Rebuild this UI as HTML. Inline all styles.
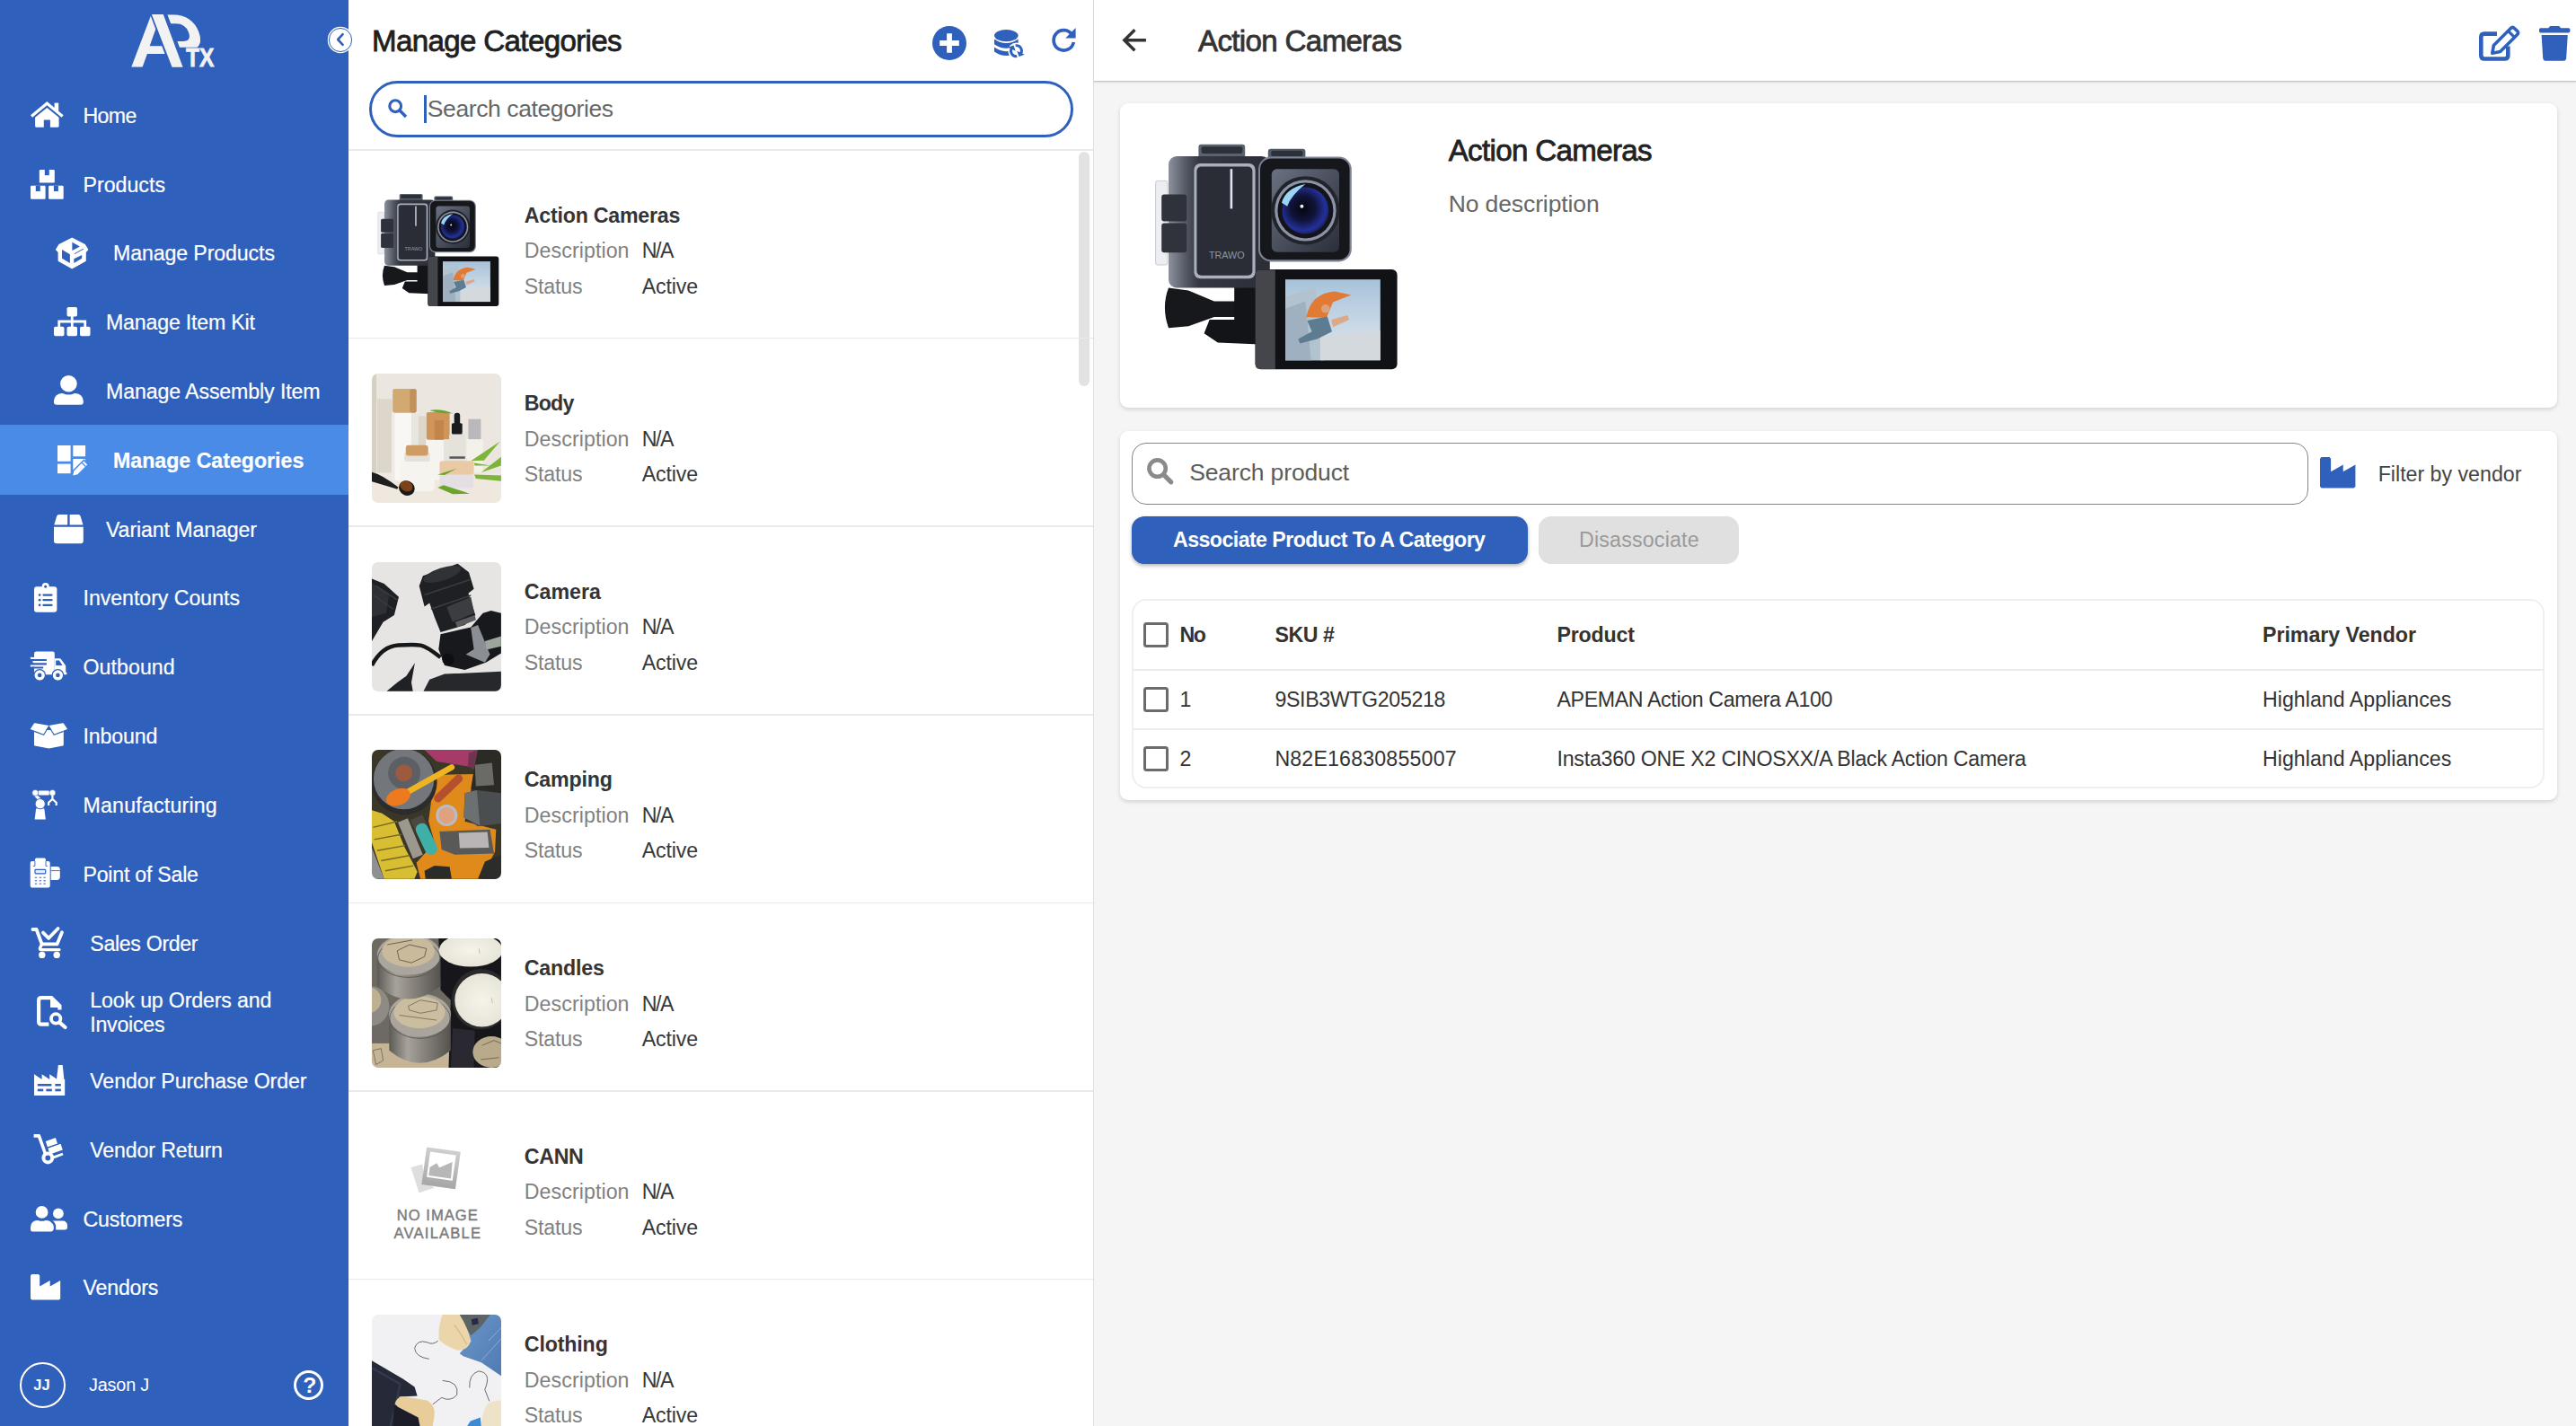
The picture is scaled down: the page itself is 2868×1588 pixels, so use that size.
<!DOCTYPE html>
<html lang="en"><head><meta charset="utf-8"><title>Manage Categories</title>
<style>
html,body{margin:0;padding:0}
body{width:2868px;height:1588px;position:relative;overflow:hidden;background:#f4f4f4;font-family:"Liberation Sans",sans-serif}
.t{position:absolute;white-space:nowrap}
.med{-webkit-text-stroke:0.8px currentColor}
.nv{-webkit-text-stroke:0.2px #fff}
svg{position:absolute;overflow:visible}
</style></head>
<body>
<div id="sidebar" style="position:absolute;left:0;top:0;width:388px;height:1588px;background:#2f60bb"></div>
<div style="position:absolute;left:0;top:473px;width:388px;height:77.6px;background:#4b8be8"></div>
<div class="t nv" id="t1" style="left:92.5px;top:113.7px;font-size:23.18px;line-height:30.1px;color:#fff;letter-spacing:-0.638px;">Home</div>
<div class="t nv" id="t2" style="left:92.5px;top:190.5px;font-size:23.18px;line-height:30.1px;color:#fff;letter-spacing:0.008px;">Products</div>
<div class="t nv" id="t3" style="left:126.0px;top:267.4px;font-size:23.18px;line-height:30.1px;color:#fff;letter-spacing:-0.116px;">Manage Products</div>
<div class="t nv" id="t4" style="left:118.0px;top:344.4px;font-size:23.18px;line-height:30.1px;color:#fff;letter-spacing:-0.194px;">Manage Item Kit</div>
<div class="t nv" id="t5" style="left:118.0px;top:421.4px;font-size:23.18px;line-height:30.1px;color:#fff;letter-spacing:-0.118px;">Manage Assembly Item</div>
<div class="t nv" id="t6" style="left:126.0px;top:497.8px;font-size:23.18px;line-height:30.1px;color:#fff;font-weight:700;letter-spacing:-0.011px;">Manage Categories</div>
<div class="t nv" id="t7" style="left:118.0px;top:574.6px;font-size:23.18px;line-height:30.1px;color:#fff;letter-spacing:-0.114px;">Variant Manager</div>
<div class="t nv" id="t8" style="left:92.5px;top:651.4px;font-size:23.18px;line-height:30.1px;color:#fff;letter-spacing:-0.045px;">Inventory Counts</div>
<div class="t nv" id="t9" style="left:92.5px;top:728.4px;font-size:23.18px;line-height:30.1px;color:#fff;letter-spacing:0.059px;">Outbound</div>
<div class="t nv" id="t10" style="left:92.5px;top:805.2px;font-size:23.18px;line-height:30.1px;color:#fff;letter-spacing:-0.127px;">Inbound</div>
<div class="t nv" id="t11" style="left:92.5px;top:881.8px;font-size:23.18px;line-height:30.1px;color:#fff;letter-spacing:0.196px;">Manufacturing</div>
<div class="t nv" id="t12" style="left:92.5px;top:958.6px;font-size:23.18px;line-height:30.1px;color:#fff;letter-spacing:-0.241px;">Point of Sale</div>
<div class="t nv" id="t13" style="left:100.3px;top:1035.5px;font-size:23.18px;line-height:30.1px;color:#fff;letter-spacing:-0.335px;">Sales Order</div>
<div class="t nv" id="t14" style="left:100.3px;top:1098.8px;font-size:23.18px;line-height:30.1px;color:#fff;letter-spacing:-0.166px;">Look up Orders and</div>
<div class="t nv" id="t15" style="left:100.3px;top:1125.5px;font-size:23.18px;line-height:30.1px;color:#fff;letter-spacing:-0.259px;">Invoices</div>
<div class="t nv" id="t16" style="left:100.3px;top:1189.3px;font-size:23.18px;line-height:30.1px;color:#fff;letter-spacing:-0.117px;">Vendor Purchase Order</div>
<div class="t nv" id="t17" style="left:100.3px;top:1266.0px;font-size:23.18px;line-height:30.1px;color:#fff;letter-spacing:-0.144px;">Vendor Return</div>
<div class="t nv" id="t18" style="left:92.5px;top:1342.8px;font-size:23.18px;line-height:30.1px;color:#fff;letter-spacing:-0.141px;">Customers</div>
<div class="t nv" id="t19" style="left:92.5px;top:1419.3px;font-size:23.18px;line-height:30.1px;color:#fff;letter-spacing:-0.189px;">Vendors</div>
<svg style="left:34.2px;top:113.3px" width="36.7" height="28.7" viewBox="0 0 36.7 28.7" ><path fill="#fff" d="M18.35,0 L36.7,15.2 L34.6,17.7 L18.35,4.3 L2.1,17.7 L0,15.2Z"/><rect fill="#fff" x="26.6" y="1.6" width="4.6" height="9"/><path fill="#fff" d="M18.35,6.9 L31.6,17.8 V27.6 Q31.6,28.7 30.5,28.7 H21.9 V20.4 H14.8 V28.7 H6.2 Q5.1,28.7 5.1,27.6 V17.8Z"/></svg>
<svg style="left:34.2px;top:188.5px" width="36.7" height="32.8" viewBox="0 0 36.7 32.8" ><rect fill="#fff" x="9.8" y="0" width="17" height="14.6" rx="1.2"/><rect fill="#2f60bb" x="15.8" y="0" width="5" height="6.2"/><rect fill="#fff" x="0" y="17.8" width="16.6" height="15" rx="1.2"/><rect fill="#2f60bb" x="5.8" y="17.8" width="5" height="6.2"/><rect fill="#fff" x="20.1" y="17.8" width="16.6" height="15" rx="1.2"/><rect fill="#2f60bb" x="25.9" y="17.8" width="5" height="6.2"/></svg>
<svg style="left:61.9px;top:265px" width="36.3" height="34.3" viewBox="0 0 36.3 34.3" ><path fill="#fff" stroke="#fff" stroke-width="1.6" stroke-linejoin="round" d="M18.2,0.4 L32.4,7.8 L35.5,13 L33,15.6 V25.2 L18.2,33.5 L3.4,25.2 V15.6 L0.8,13 L3.9,7.8Z"/><path fill="#2f60bb" d="M18.4,4.7 L26.9,9.5 L18.4,14.1Z"/><path fill="#2f60bb" d="M7,12.9 L15.9,18.2 V28 L7,22.8Z"/><path fill="#2f60bb" d="M20.3,23.2 L29.2,18.9 V22.8 L20.3,28Z"/><path d="M21.1,17.6 L30.9,12.2" stroke="#2f60bb" stroke-width="1"/></svg>
<svg style="left:59.7px;top:341.7px" width="40.5" height="32.3" viewBox="0 0 40.5 32.3" ><rect fill="#fff" x="14.5" y="0" width="11.5" height="10.5" rx="1.8"/><rect fill="#fff" x="0" y="21.8" width="11.5" height="10.5" rx="1.8"/><rect fill="#fff" x="14.5" y="21.8" width="11.5" height="10.5" rx="1.8"/><rect fill="#fff" x="29" y="21.8" width="11.5" height="10.5" rx="1.8"/><path d="M20.25,10 V22 M5.75,22 V16 H34.75 V22" fill="none" stroke="#fff" stroke-width="2.8"/></svg>
<svg style="left:59.7px;top:418.3px" width="32.8" height="32.8" viewBox="0 0 32.8 32.8" ><circle fill="#fff" cx="16.4" cy="9.3" r="9.3"/><path fill="#fff" d="M0,29.8 V28.6 A8.6,8.6 0 0 1 8.6,20 H9.8 A15,15 0 0 0 23,20 H24.2 A8.6,8.6 0 0 1 32.8,28.6 V29.8 A3,3 0 0 1 29.8,32.8 H3 A3,3 0 0 1 0,29.8Z"/></svg>
<svg style="left:64.3px;top:496px" width="34.2" height="33.6" viewBox="0 0 34.2 33.6" ><rect fill="#fff" x="0" y="0" width="14.6" height="17.8"/><rect fill="#fff" x="0" y="20.6" width="14.6" height="10.6"/><rect fill="#fff" x="17.3" y="0" width="13.8" height="12.3"/><path fill="#fff" d="M17.3,15 H31.1 V19 L23,27.5 H17.3Z"/><path d="M18.2,32.6 L32.6,18.2" stroke="#4b8be8" stroke-width="8.6" fill="none"/><path fill="#fff" d="M17.2,33.6 L18.4,28.4 L29.3,17.5 L33.2,21.4 L22.3,32.3Z"/><path d="M27.2,19.2 L31.4,23.4" stroke="#4b8be8" stroke-width="1.4"/></svg>
<svg style="left:59.7px;top:572.6px" width="32.8" height="32.3" viewBox="0 0 32.8 32.3" ><path fill="#fff" d="M5.6,0 H15.2 V11.4 H0.3 L3.2,1.8 Q3.8,0 5.6,0Z"/><path fill="#fff" d="M27.2,0 H17.6 V11.4 H32.5 L29.6,1.8 Q29,0 27.2,0Z"/><path fill="#fff" d="M0,13.7 H32.8 V29.3 A3,3 0 0 1 29.8,32.3 H3 A3,3 0 0 1 0,29.3Z"/></svg>
<svg style="left:37.8px;top:649.2px" width="25.4" height="32.8" viewBox="0 0 25.4 32.8" ><rect fill="#fff" x="0" y="4.2" width="25.4" height="28.6" rx="3"/><circle fill="#fff" cx="12.7" cy="4" r="4"/><circle fill="#2f60bb" cx="12.7" cy="4.2" r="1.5"/><g stroke="#2f60bb" stroke-width="2.2" stroke-linecap="round"><path d="M10.4,13.6 H19.6 M10.4,19.2 H19.6 M10.4,24.8 H19.6"/></g><g fill="#2f60bb"><circle cx="6.1" cy="13.6" r="1.4"/><circle cx="6.1" cy="19.2" r="1.4"/><circle cx="6.1" cy="24.8" r="1.4"/></g></svg>
<svg style="left:34.2px;top:725.8px" width="40.5" height="32" viewBox="0 0 40.5 32" ><path fill="#fff" d="M6.4,-0.4 H24.6 Q26.8,-0.4 26.8,1.8 V25.2 H4 V2 Q4,-0.4 6.4,-0.4Z"/><path fill="#fff" d="M0.7,5.7 H5 V7.9 H0.7 Q-0.3,7.9 -0.3,6.8 Q-0.3,5.7 0.7,5.7Z M3.3,10.1 H5 V12.2 H3.3 Q2.3,12.2 2.3,11.1 Q2.3,10.1 3.3,10.1Z M0.7,14.4 H5 V16.5 H0.7 Q-0.3,16.5 -0.3,15.4 Q-0.3,14.4 0.7,14.4Z"/><path fill="#2f60bb" d="M3.6,7.9 H17.9 V10.1 H3.6Z M3.6,12.2 H17.9 V14.4 H3.6Z M2,16.5 H14.2 V18.4 H2Z M2,3.6 H4 V5.7 H2Z"/><path fill="#fff" d="M26.8,7.2 H32.2 Q33.2,7.2 33.9,8 L38.6,14.6 Q39.2,15.4 39.2,16.4 V22.4 H39.6 Q40.4,22.4 40.4,23.2 V24.4 Q40.4,25.2 39.6,25.2 H26.8Z"/><path fill="#2f60bb" d="M28.2,9.4 H31.9 L35.6,15 H28.2Z"/><circle fill="#fff" cx="10.2" cy="25.9" r="6.3" stroke="#2f60bb" stroke-width="1.3"/><circle fill="#2f60bb" cx="10.2" cy="25.9" r="2.3"/><circle fill="#fff" cx="30.4" cy="25.9" r="6.3" stroke="#2f60bb" stroke-width="1.3"/><circle fill="#2f60bb" cx="30.4" cy="25.9" r="2.3"/></svg>
<svg style="left:34.2px;top:803.8px" width="40.5" height="29.5" viewBox="0 0 40.5 29.5" ><path fill="#fff" d="M4,9 H36.8 V25.6 Q36.8,26.4 36,26.6 L20.4,29.5 L4.8,26.6 Q4,26.4 4,25.6Z"/><path fill="#fff" d="M-0.3,7.9 L4,1.6 Q4.4,1 5.2,1.2 L20.4,4 L14.5,13.6Z"/><path fill="#fff" d="M41.1,7.9 L36.8,1.6 Q36.4,1 35.6,1.2 L20.4,4 L26.3,13.6Z"/><path d="M4.2,10.4 L14.6,14.3 L20.4,5 L26.2,14.3 L36.6,10.4" fill="none" stroke="#2f60bb" stroke-width="1.15"/></svg>
<svg style="left:36.4px;top:878.7px" width="27.9" height="33.7" viewBox="0 0 27.9 33.7" ><path fill="#fff" d="M4.1,21.4 H13.3 L14.8,33.5 H2.6Z"/><path d="M3.6,6.6 L8.2,11.4" stroke="#fff" stroke-width="3.4"/><circle fill="#fff" cx="8.7" cy="16.2" r="5.6" stroke="#2f60bb" stroke-width="0.9"/><rect fill="#fff" x="6.6" y="1.6" width="12.4" height="4.8" rx="1.4"/><circle fill="#fff" cx="3.3" cy="3.9" r="3.5" stroke="#2f60bb" stroke-width="0.6"/><circle fill="#fff" cx="22.4" cy="3.9" r="3.5" stroke="#2f60bb" stroke-width="0.6"/><path d="M22.4,7 V11.4 M18.1,18 V14.8 L22.4,10.9 L26.7,14.8 V18" fill="none" stroke="#fff" stroke-width="2.2"/></svg>
<svg style="left:34.2px;top:956.2px" width="32.8" height="32.8" viewBox="0 0 32.8 32.8" ><rect fill="#fff" x="4.9" y="-0.4" width="12.1" height="10" rx="1.8"/><rect fill="#fff" x="-0.3" y="2.9" width="22" height="29.5" rx="2"/><path d="M3,8.4 H4.9 V2.9 M17,2.9 V8.4 H18.8" fill="none" stroke="#2f60bb" stroke-width="0.9"/><path fill="#fff" d="M22.7,8.9 H29.4 Q32.8,8.9 32.8,12.3 V20.6 Q32.8,24 29.4,24 H22.7Z"/><path d="M22.7,13.6 H32.8" stroke="#2f60bb" stroke-width="0.9"/><rect x="5" y="12.3" width="11.7" height="4.6" rx="0.8" fill="#e9eefa" stroke="#2f60bb" stroke-width="1.2"/><g fill="#2f60bb"><rect x="4.8" y="20.7" width="2.4" height="1"/><rect x="9.7" y="20.7" width="2.4" height="1"/><rect x="14.4" y="20.7" width="2.4" height="1"/><rect x="4.8" y="24.3" width="2.4" height="1"/><rect x="9.7" y="24.3" width="2.4" height="1"/><rect x="14.4" y="24.3" width="2.4" height="1"/><rect x="4.8" y="27.6" width="2.4" height="1"/><rect x="9.7" y="27.6" width="2.4" height="1"/><rect x="14.4" y="27.6" width="2.4" height="1"/></g></svg>
<svg style="left:35.9px;top:1032px" width="34.7" height="35" viewBox="0 0 34.7 35" ><path d="M0.4,3 H4.6 L10.6,19.4 H27.6 L33,6.2" fill="none" stroke="#fff" stroke-width="3.8" stroke-linejoin="round" stroke-linecap="round"/><path d="M12,6.6 L18.2,12.8 L28.6,2" fill="none" stroke="#fff" stroke-width="3.8" stroke-linejoin="round" stroke-linecap="round"/><path d="M10.6,19.4 L8.6,23.4 Q7.8,25.6 10,25.6 H30" fill="none" stroke="#fff" stroke-width="3.4" stroke-linecap="round"/><circle fill="#fff" cx="10.8" cy="31.4" r="3.7"/><circle fill="#fff" cx="27.2" cy="31.4" r="3.7"/></svg>
<svg style="left:40.5px;top:1108.5px" width="33.4" height="36.5" viewBox="0 0 33.4 36.5" ><path d="M13.4,31.6 H5 Q2.1,31.6 2.1,28.8 V5 Q2.1,2.1 5,2.1 H16.2 L25.4,11.2 V15.4" fill="none" stroke="#fff" stroke-width="4.2"/><path fill="#fff" d="M15,1.6 L26.4,13 H15Z"/><circle cx="21.2" cy="25.4" r="5.2" fill="none" stroke="#fff" stroke-width="3.8"/><path d="M25,29.4 L31.6,35" stroke="#fff" stroke-width="4.2" stroke-linecap="round"/></svg>
<svg style="left:37.8px;top:1186px" width="34.2" height="34" viewBox="0 0 34.2 34" ><path fill="#fff" d="M26.9,0 H31.7 L33.5,17 H24.9Z"/><path fill="#fff" d="M0,17 V10.2 L8.6,16 V10.2 L17.2,16 V10.2 L25.8,16 H34.2 V34 H0Z"/><g fill="#2f60bb"><rect x="3.8" y="21" width="15.6" height="2.5"/><rect x="23.4" y="21" width="6.4" height="2.5"/><rect x="3.8" y="26.6" width="6.4" height="2.7"/><rect x="13.4" y="26.6" width="6.4" height="2.7"/><rect x="23.4" y="26.6" width="6.4" height="2.7"/></g></svg>
<svg style="left:36.8px;top:1263.2px" width="33.2" height="33.4" viewBox="0 0 33.2 33.4" ><path d="M0.6,1.9 H6.4 L14.2,24" fill="none" stroke="#fff" stroke-width="3.6" stroke-linejoin="round"/><path fill="#fff" d="M13.8,7.9 L24.9,3.9 L27,10.4 L15.9,14.3Z"/><path fill="#fff" d="M16.4,15.7 L30.6,10.8 L32.8,17.5 L18.6,22.5Z"/><path d="M22.6,25.8 L33,22" stroke="#fff" stroke-width="2.9"/><circle cx="16.3" cy="26.5" r="4.9" fill="#2f60bb" stroke="#fff" stroke-width="4"/></svg>
<svg style="left:33.9px;top:1342.5px" width="41" height="28.5" viewBox="0 0 41 28.5" ><circle fill="#fff" cx="30.9" cy="8.4" r="5.9"/><path fill="#fff" d="M24,16.6 H36 A5,5 0 0 1 41,21.6 V24 A2.4,2.4 0 0 1 38.6,26.4 H24Z"/><path d="M27,28.5 V24 A8.4,8.4 0 0 0 20,15.4" fill="none" stroke="#2f60bb" stroke-width="2.4"/><circle fill="#fff" cx="12.6" cy="6.9" r="6.9"/><path fill="#fff" d="M0,26 V23.4 A7.5,7.5 0 0 1 7.5,15.9 H8.4 A10,10 0 0 0 16.8,15.9 H17.6 A7.5,7.5 0 0 1 25.1,23.4 V26 A2.5,2.5 0 0 1 22.6,28.5 H2.5 A2.5,2.5 0 0 1 0,26Z"/></svg>
<svg style="left:33.9px;top:1419.4px" width="33.2" height="28.6" viewBox="0 0 33.2 28.6" ><path fill="#fff" d="M0.00,1.40 L1.40,0.00 L8.80,0.00 L10.20,1.40 L10.20,13.40 L21.70,7.00 L21.70,13.40 L33.20,7.00 L33.20,27.20 L31.80,28.60 L1.40,28.60 L0.00,27.20Z"/></svg>
<div style="position:absolute;left:21.5px;top:1517px;width:51.2px;height:51.2px;box-sizing:border-box;border:2.6px solid #fff;border-radius:50%"></div>
<div class="t " id="t20" style="left:37.3px;top:1531.8px;font-size:16.56px;line-height:21.5px;color:#fff;font-weight:700;letter-spacing:-0.119px;">JJ</div>
<div class="t " id="t21" style="left:99.1px;top:1529.7px;font-size:19.87px;line-height:25.8px;color:#fff;letter-spacing:-0.224px;">Jason J</div>
<div style="position:absolute;left:326.8px;top:1526px;width:32.8px;height:32.8px;box-sizing:border-box;border:3px solid #fff;border-radius:50%"></div>
<div class="t " id="t22" style="left:337.3px;top:1527.0px;font-size:24.84px;line-height:32.3px;color:#fff;font-weight:700;letter-spacing:-1.500px;">?</div>
<div id="mid" style="position:absolute;left:388px;top:0;width:829px;height:1588px;background:#fff"></div>
<div style="position:absolute;left:1216.5px;top:0;width:1.6px;height:1588px;background:#dcdfe4"></div>
<div class="t med" id="t23" style="left:414.0px;top:23.7px;font-size:33.12px;line-height:43.1px;color:#1f1f1f;font-weight:500;letter-spacing:-0.648px;">Manage Categories</div>
<div style="position:absolute;left:410.6px;top:90.4px;width:784px;height:62.8px;box-sizing:border-box;border:3.2px solid #2f60bb;border-radius:32px;background:#fff"></div>
<div style="position:absolute;left:472px;top:105.7px;width:2.6px;height:31.6px;background:#2f60bb"></div>
<div class="t " id="t24" style="left:475.8px;top:103.8px;font-size:26.5px;line-height:34.5px;color:#666;letter-spacing:-0.400px;">Search categories</div>
<svg style="left:1037.7px;top:28.6px" width="38" height="38" viewBox="0 0 38 38" ><circle cx="19" cy="19" r="19" fill="#2f60bb"/><path d="M19,8.2 V29.8 M8.2,19 H29.8" stroke="#fff" stroke-width="5.8"/></svg>
<svg style="left:1107.3px;top:32.9px" width="31.4" height="33" viewBox="0 0 31.4 33" ><ellipse cx="13.3" cy="6.6" rx="13.3" ry="6.6" fill="#2f60bb"/><path fill="#2f60bb" d="M0,10.4 Q13.3,19.6 26.6,10.4 V16.2 Q13.3,25.4 0,16.2Z"/><path fill="#2f60bb" d="M0,19.6 Q13.3,28.8 26.6,19.6 V24.6 Q13.3,33.6 0,24.6Z"/><circle cx="24.5" cy="23.7" r="9.2" fill="#fff"/><g transform="rotate(70 24.5 23.7)"><path d="M18.6,22.4 A6,6 0 0 1 29,19.8 M30.4,25 A6,6 0 0 1 20,27.6" fill="none" stroke="#2f60bb" stroke-width="2.9"/><path fill="#2f60bb" d="M31.4,16.4 V23 H24.8Z M17.6,31 V24.4 H24.2Z"/></g></svg>
<svg style="left:1171.4px;top:30.7px" width="27" height="27" viewBox="0 0 27 27" ><path d="M22.6,7.6 A11.2,11.2 0 1 0 24.3,16" fill="none" stroke="#2f60bb" stroke-width="3.7"/><path fill="#2f60bb" d="M26.6,0 V11.4 H15.2Z"/></svg>
<svg style="left:431.7px;top:109.8px" width="21.2" height="21.2" viewBox="0 0 21.2 21.2" ><circle cx="8.2" cy="8.2" r="6.4" fill="none" stroke="#2f60bb" stroke-width="3.1"/><path d="M12.8,12.8 L20,20" stroke="#2f60bb" stroke-width="3.4"/></svg>
<svg style="left:146px;top:15.5px" width="92" height="58.4" viewBox="0 0 92 58.4" ><defs><clipPath id="pclip"><rect x="20" y="-2" width="70" height="38.7"/></clipPath></defs><g clip-path="url(#pclip)"><text x="17.4" y="61" font-family="Liberation Sans, sans-serif" font-weight="700" fill="#f2f2f2" font-size="88" transform="skewX(21.3)" textLength="53" lengthAdjust="spacingAndGlyphs">P</text></g><text x="-1.8" y="58.4" font-family="Liberation Sans, sans-serif" font-weight="700" fill="#f2f2f2" font-size="81.6" textLength="61.6" lengthAdjust="spacingAndGlyphs">A</text><polygon points="34,-2 39.6,-2 62,58.4 56,58.4" fill="#2f60bb"/><polygon points="20.4,-2 23.4,-2 46,58.4 43,58.4" fill="#2f60bb"/><polygon points="22.9,0 35.8,0 57.5,58.4 45.5,58.4" fill="#f2f2f2"/><text x="61" y="57.9" font-family="Liberation Sans, sans-serif" font-weight="700" fill="#f2f2f2" font-size="29.4" stroke="#f2f2f2" stroke-width="0.8" textLength="31.4" lengthAdjust="spacingAndGlyphs">TX</text></svg>
<div style="position:absolute;left:365.6px;top:31.4px;width:26.8px;height:26.8px;box-sizing:border-box;border-radius:50%;background:#fff;border:1.4px solid #2f60bb;box-shadow:0 0 0 1.2px #fff"></div>
<svg style="left:372px;top:36px" width="14" height="16" viewBox="0 0 14 16" ><path d="M9.6,2.2 L4.2,8 L9.6,13.8" fill="none" stroke="#2f60bb" stroke-width="2.6" stroke-linecap="round" stroke-linejoin="round"/></svg>
<div style="position:absolute;left:388px;top:166px;width:829px;height:1.5px;background:#e9eaec"></div>
<div style="position:absolute;left:1201.4px;top:168.8px;width:12px;height:261px;background:#e2e2e2;border-radius:6px"></div>
<svg width="0" height="0" style="left:0;top:0"><defs><symbol id="actioncam" viewBox="0 0 144 144"><defs><linearGradient id="acCase" x1="0" y1="0" x2="1" y2="0"><stop offset="0" stop-color="#8b919d"/><stop offset="0.2" stop-color="#4b505b"/><stop offset="0.3" stop-color="#353842"/><stop offset="1" stop-color="#2b2e36"/></linearGradient><linearGradient id="acPanel" x1="0" y1="0" x2="1" y2="1"><stop offset="0" stop-color="#6a7182"/><stop offset="1" stop-color="#2b2e3a"/></linearGradient><linearGradient id="acSky" x1="0" y1="0" x2="0" y2="1"><stop offset="0" stop-color="#a7c3da"/><stop offset="1" stop-color="#e2e8ee"/></linearGradient><radialGradient id="acLens" cx="0.45" cy="0.45" r="0.6"><stop offset="0" stop-color="#05060c"/><stop offset="0.45" stop-color="#10143a"/><stop offset="0.8" stop-color="#24309a"/><stop offset="1" stop-color="#141a4c"/></radialGradient></defs><rect x="6.8" y="30.2" width="6.6" height="46.8" rx="1" fill="#eceef1" stroke="#c6cad2" stroke-width="0.5"/><rect x="30.7" y="9.9" width="25.9" height="8.6" rx="1.5" fill="#59636f" /><rect x="32.3" y="11.1" width="22.9" height="3.9" rx="1" fill="#2c3038" /><rect x="69.4" y="12.4" width="20.8" height="6.6" rx="1.5" fill="#525c68" /><rect x="71.1" y="13.4" width="17.6" height="3.1" rx="1" fill="#2c3038" /><path d="M14.0,89.7 Q9.9,100.4 14.0,112.1 L25.1,111.1 L39.4,106.0 H51.6 V97.3 H39.4 L25.1,91.2Z" fill="#17181c"/><path d="M50.6,88.2 H64.8 V121.2 L41.4,120.2 L33.8,115.1 L36.8,107.5 H50.6Z" fill="#131418"/><rect x="14.0" y="16.5" width="56.4" height="73.2" rx="4.5" fill="url(#acCase)" /><rect x="10.1" y="37.8" width="14.0" height="14.9" rx="1.5" fill="#2f323a" /><rect x="10.1" y="53.8" width="14.0" height="16.3" rx="1.5" fill="#30333b" /><rect x="28.2" y="20.5" width="34.1" height="64.1" rx="3.5" fill="#aab0bc" /><rect x="29.7" y="22.3" width="31.0" height="60.6" rx="2.5" fill="#2a2d35" /><rect x="48.3" y="23.6" width="1.3" height="22.1" rx="0" fill="#dfe6f2" /><text x="36.5" y="73.3" font-family="Liberation Sans, sans-serif" font-size="5.1" fill="#9096a2" textLength="19.8" lengthAdjust="spacingAndGlyphs">TRAWO</text><rect x="64.0" y="16.8" width="51.9" height="58.4" rx="7" fill="#7d8494" /><rect x="65.0" y="17.8" width="49.8" height="56.3" rx="6" fill="#16171b" /><rect x="71.4" y="23.6" width="37.6" height="46.3" rx="3" fill="url(#acPanel)" /><circle cx="90.2" cy="46.7" r="19.1" fill="#22242b"/><circle cx="90.2" cy="46.7" r="17.1" fill="#8d93a6"/><circle cx="90.2" cy="46.7" r="15.5" fill="#13141a"/><circle cx="90.2" cy="46.7" r="13.0" fill="url(#acLens)"/><path d="M77.0,42.4 Q79.0,34.3 90.2,32.0 Q82.1,38.3 80.1,44.4Z" fill="#9ad4f0"/><circle cx="88.2" cy="44.4" r="1.0" fill="#e8f0ff"/><rect x="62.3" y="79.5" width="79.0" height="55.6" rx="3" fill="#111215" /><path d="M64.8,79.8 H73.4 V135.0 H64.8 Q62.3,135.0 62.3,131.9 V82.6 Q62.3,79.8 64.8,79.8Z" fill="#44464c"/><rect x="79.0" y="85.1" width="52.9" height="45.0" rx="0" fill="url(#acSky)" /><polygon points="79.0,94.8 95.8,89.4 100.4,130.1 79.0,130.1" fill="#b3c2cf" /><polygon points="79.0,101.4 90.2,97.3 93.3,130.1 79.0,130.1" fill="#9fb0c0" /><polygon points="98.4,116.6 131.9,113.6 131.9,130.1 98.4,130.1" fill="#d4d9de" /><path d="M90.7,106.0 Q93.3,92.7 106.5,91.7 L115.7,93.8 L105.5,97.8 L101.9,106.5Z" fill="#e07a34"/><circle cx="101.4" cy="101.4" r="2.4" fill="#d9a27c"/><path d="M91.2,108.0 L102.4,105.7 L105.0,114.1 L96.8,118.2 L87.2,120.7 L86.2,118.2 L93.8,114.1Z" fill="#5d7c92"/><path d="M104.5,107.5 L113.6,105.0 L114.6,107.5 L105.5,111.6Z" fill="#dba98a"/></symbol></defs></svg>
<svg style="left:413.5px;top:206.4px" width="144" height="144" viewBox="0 0 144 144"><use href="#actioncam" width="144" height="144"/></svg>
<div class="t " id="t25" style="left:583.8px;top:224.5px;font-size:23.18px;line-height:30.1px;color:#343436;font-weight:700;letter-spacing:-0.217px;">Action Cameras</div>
<div class="t " id="t26" style="left:583.8px;top:264.1px;font-size:23.18px;line-height:30.1px;color:#818181;letter-spacing:0.079px;">Description</div>
<div class="t " id="t27" style="left:714.7px;top:264.1px;font-size:23.18px;line-height:30.1px;color:#38383b;letter-spacing:-1.465px;">N/A</div>
<div class="t " id="t28" style="left:583.8px;top:303.6px;font-size:23.18px;line-height:30.1px;color:#818181;letter-spacing:-0.200px;">Status</div>
<div class="t " id="t29" style="left:714.7px;top:303.6px;font-size:23.18px;line-height:30.1px;color:#38383b;letter-spacing:-0.120px;">Active</div>
<div style="position:absolute;left:388px;top:375.8px;width:829px;height:1.6px;background:#e9e9e9"></div>
<svg style="left:413.5px;top:416.0px;overflow:hidden" width="144" height="144.0" viewBox="0 0 144 144.0"><defs><clipPath id="tc1"><rect width="144" height="144" rx="7"/></clipPath><filter id="sf1" x="-5%" y="-5%" width="110%" height="110%" color-interpolation-filters="sRGB"><feGaussianBlur stdDeviation="0.7" color-interpolation-filters="sRGB"/></filter></defs><g clip-path="url(#tc1)"><g filter="url(#sf1)"><rect width="144" height="144" fill="#ebe7e0"/><rect x="0" y="0" width="5.1" height="112.2" fill="#d6d0c4"/><rect x="0" y="110.8" width="144" height="33.2" fill="#efe8df"/><rect x="5.8" y="28.3" width="16.8" height="81.9" fill="#ddd6ca"/><rect x="105.7" y="73.2" width="18.0" height="37.0" fill="#f3f1ea"/><rect x="107.4" y="50.7" width="14.0" height="22.4" fill="#b9b9bb"/><rect x="22.1" y="42.9" width="29.7" height="76.3" rx="2" fill="#f8f7f4"/><rect x="44.0" y="44.0" width="7.9" height="75.2" fill="#e9e6e0"/><rect x="22.1" y="44.0" width="3.4" height="75.2" fill="#eeebe6"/><rect x="23.2" y="17.1" width="26.4" height="26.7" rx="2" fill="#d3a972"/><rect x="42.3" y="17.3" width="7.3" height="26.3" rx="2" fill="#c0935c"/><rect x="51.9" y="47.4" width="8.4" height="67.3" fill="#dcd6cb"/><rect x="60.3" y="72.6" width="26.4" height="46.0" fill="#f6f4f1"/><rect x="60.8" y="42.9" width="25.8" height="30.9" rx="2" fill="#cf9559"/><rect x="69.8" y="51.9" width="10.1" height="21.9" fill="#b9793f" opacity="0.55"/><rect x="79.9" y="73.2" width="6.7" height="44.9" fill="#e6e2dc"/><rect x="86.1" y="67.6" width="18.0" height="33.7" rx="2" fill="#e4e2da"/><rect x="86.4" y="92.3" width="17.4" height="2.5" fill="#55555a"/><rect x="88.9" y="55.2" width="11.8" height="12.3" rx="1.5" fill="#1b1b1e"/><rect x="91.7" y="43.8" width="6.5" height="13.5" rx="3" fill="#1b1b1e"/><rect x="75.6" y="111.3" width="37.7" height="16.3" rx="3" fill="#e3dfe2"/><rect x="75.4" y="97.3" width="38.2" height="15.2" rx="3" fill="#ecc9a5"/><rect x="31.1" y="96.7" width="38.7" height="34.2" rx="4" fill="#f6f4ef"/><rect x="36.1" y="87.8" width="28.6" height="10.1" rx="2" fill="#e6e1d8"/><rect x="37.8" y="79.7" width="24.9" height="11.8" rx="3" fill="#cf9d63"/><path d="M110.2,97.3 L142.8,75.4 L124.8,96.7Z M121.4,110.2 L143.9,92.8 L143.9,102.4Z M114.1,112.5 L143.9,113.6 L143.9,119.8 L115.8,116.9Z M113.6,99.6 L132.7,102.4 L114.7,102.4Z" fill="#7db53a"/><path d="M73.2,112.5 L94.5,105.7 L81.0,113.0Z M73.2,127.0 L79.9,124.2 L109.1,133.8 L90.0,134.3Z M64.2,40.9 Q76.5,38.4 90.0,44.2 Q76.5,45.1 64.2,40.9Z" fill="#6aa52e"/><path d="M0.0,109.7 Q11.4,112.5 29.4,126.5 L28.3,128.7 Q11.4,123.7 0.0,120.3Z" fill="#1e1e20"/><ellipse cx="38.9" cy="127.6" rx="9.0" ry="8.1" fill="#1c1a18" transform="rotate(25 38.9 127.6)"/><ellipse cx="38.4" cy="125.4" rx="7.4" ry="5.6" fill="#7a431a" transform="rotate(25 38.4 125.4)"/></g></g></svg>
<div class="t " id="t30" style="left:583.8px;top:434.2px;font-size:23.18px;line-height:30.1px;color:#343436;font-weight:700;letter-spacing:-0.815px;">Body</div>
<div class="t " id="t31" style="left:583.8px;top:473.8px;font-size:23.18px;line-height:30.1px;color:#818181;letter-spacing:0.079px;">Description</div>
<div class="t " id="t32" style="left:714.7px;top:473.8px;font-size:23.18px;line-height:30.1px;color:#38383b;letter-spacing:-1.465px;">N/A</div>
<div class="t " id="t33" style="left:583.8px;top:513.2px;font-size:23.18px;line-height:30.1px;color:#818181;letter-spacing:-0.200px;">Status</div>
<div class="t " id="t34" style="left:714.7px;top:513.2px;font-size:23.18px;line-height:30.1px;color:#38383b;letter-spacing:-0.120px;">Active</div>
<div style="position:absolute;left:388px;top:585.4px;width:829px;height:1.6px;background:#e9e9e9"></div>
<svg style="left:413.5px;top:625.6px;overflow:hidden" width="144" height="144.0" viewBox="0 0 144 144.0"><defs><clipPath id="tc2"><rect width="144" height="144" rx="7"/></clipPath><filter id="sf2" x="-5%" y="-5%" width="110%" height="110%" color-interpolation-filters="sRGB"><feGaussianBlur stdDeviation="0.7" color-interpolation-filters="sRGB"/></filter></defs><g clip-path="url(#tc2)"><g filter="url(#sf2)"><rect width="144" height="144" fill="#e6e5e3"/><polygon points="0.0,18.5 13.7,24.1 30.0,38.7 24.9,58.9 12.6,66.8 0.0,88.1" fill="#1f2024" /><polygon points="0.0,23.0 19.3,36.5 15.9,56.7 0.0,61.2" fill="#2e3036" /><path d="M0.0,115.0 Q11.4,93.7 29.4,92.6 T54.1,92.6 T76.5,106.1" fill="none" stroke="#17181a" stroke-width="4.5"/><polygon points="52.7,26.4 56.9,15.2 95.6,1.7 108.0,11.2 113.6,29.7 107.4,34.8 115.3,58.9 103.5,70.1 76.5,78.0 69.8,61.2 64.2,45.5 58.6,49.4" fill="#1f2024" /><polygon points="83.3,49.9 110.2,38.7 114.1,56.7 90.0,66.8" fill="#3b3d42" /><polygon points="92.8,66.8 114.7,58.9 115.8,64.5 95.1,72.4" fill="#5a5c60" /><ellipse cx="78.2" cy="13.5" rx="21.9" ry="7.0" fill="#303236" transform="rotate(-18 78.2 13.5)"/><path d="M58.6,36.5 L109.1,19.6 M65.9,52.2 L110.2,37.0" stroke="#3a3c41" stroke-width="1.6"/><path d="M4.7,26.4 L28.3,42.1 M1.3,36.5 L23.8,52.2" stroke="#3a3c41" stroke-width="1.4"/><polygon points="76.5,80.2 110.2,72.4 123.7,56.7 132.7,53.9 143.9,56.7 143.9,101.6 127.0,111.7 103.5,120.1 81.0,115.0 74.3,97.1" fill="#18191c" /><polygon points="110.2,73.0 118.1,70.1 131.5,102.7 125.9,111.7 104.6,102.7 113.6,97.1" fill="#8b8e94" /><polygon points="125.9,88.1 143.9,82.5 143.9,93.7 127.6,97.6" fill="#9ea59c" /><circle cx="85.0" cy="108.3" r="6.7" fill="#0e0f11"/><polygon points="57.5,143.7 64.2,130.8 81.0,124.6 143.9,121.8 143.9,143.7" fill="#26282c" /><polygon points="16.5,143.7 28.3,134.1 38.4,126.8 47.9,112.2 44.0,134.1 45.7,143.7" fill="#1f2125" /></g></g></svg>
<div class="t " id="t35" style="left:583.8px;top:643.8px;font-size:23.18px;line-height:30.1px;color:#343436;font-weight:700;letter-spacing:-0.006px;">Camera</div>
<div class="t " id="t36" style="left:583.8px;top:683.4px;font-size:23.18px;line-height:30.1px;color:#818181;letter-spacing:0.079px;">Description</div>
<div class="t " id="t37" style="left:714.7px;top:683.4px;font-size:23.18px;line-height:30.1px;color:#38383b;letter-spacing:-1.465px;">N/A</div>
<div class="t " id="t38" style="left:583.8px;top:722.8px;font-size:23.18px;line-height:30.1px;color:#818181;letter-spacing:-0.200px;">Status</div>
<div class="t " id="t39" style="left:714.7px;top:722.8px;font-size:23.18px;line-height:30.1px;color:#38383b;letter-spacing:-0.120px;">Active</div>
<div style="position:absolute;left:388px;top:795.0px;width:829px;height:1.6px;background:#e9e9e9"></div>
<svg style="left:413.5px;top:835.2px;overflow:hidden" width="144" height="144.0" viewBox="0 0 144 144.0"><defs><clipPath id="tc3"><rect width="144" height="144" rx="7"/></clipPath><filter id="sf3" x="-5%" y="-5%" width="110%" height="110%" color-interpolation-filters="sRGB"><feGaussianBlur stdDeviation="0.7" color-interpolation-filters="sRGB"/></filter></defs><g clip-path="url(#tc3)"><g filter="url(#sf3)"><rect width="144" height="144" fill="#3a3628"/><polygon points="69.8,28.1 115.8,26.9 108.0,52.7 103.5,79.7 138.3,88.7 137.1,113.4 121.4,143.7 54.1,143.7 49.6,125.7 69.8,103.3 63.1,79.7" fill="#df8a1a" /><polygon points="58.6,0.0 118.6,0.0 113.0,19.6 72.1,12.9" fill="#a63a68" /><polygon points="108.0,3.4 118.6,0.0 114.7,22.4 106.8,18.0" fill="#6e3550" /><polygon points="118.1,0.0 143.9,0.0 143.9,48.3 110.2,43.8 113.6,22.4" fill="#2b2a24" /><polygon points="114.7,16.8 133.8,14.6 136.0,39.3 115.8,40.4" fill="#6a6a66" /><polygon points="103.5,48.3 116.9,44.9 143.9,48.3 143.9,81.9 118.1,85.3 102.4,75.2" fill="#4b4e50" /><polygon points="103.5,48.3 116.9,44.9 120.3,84.2 102.4,75.2" fill="#6c7070" /><circle cx="36.1" cy="35.9" r="36.5" fill="#2c2c2c"/><circle cx="35.6" cy="32.5" r="33.7" fill="#73767a"/><circle cx="36.1" cy="25.8" r="18.0" fill="#5c5f63"/><circle cx="35.6" cy="25.8" r="9.5" fill="#9c5a3e"/><path d="M37.3,48.3 L88.9,19.3" stroke="#efb422" stroke-width="6.5" stroke-linecap="round"/><ellipse cx="29.4" cy="52.7" rx="14.0" ry="9.0" fill="#ee7a1e" transform="rotate(-22 29.4 52.7)"/><path d="M73.7,53.9 L96.7,32.0" stroke="#b4502e" stroke-width="9.0" stroke-linecap="round"/><circle cx="83.3" cy="73.0" r="12.1" fill="#b6bccb"/><circle cx="83.3" cy="73.0" r="9.2" fill="#e0a27e"/><polygon points="75.4,90.9 131.5,88.7 136.0,115.6 92.3,116.7 77.7,111.1" fill="#595a58" /><polygon points="96.7,92.6 128.7,91.5 130.4,108.9 97.9,109.4" fill="#b9b5b6" /><polygon points="0.0,67.3 11.4,70.7 24.9,79.7 36.1,107.7 50.7,135.8 47.4,143.7 13.7,143.7 0.0,103.3" fill="#d7be33" /><path d="M1.3,86.4 L28.3,79.7 M2.5,99.9 L32.8,94.3 M5.8,112.2 L37.3,106.6 M10.3,123.5 L41.8,117.8 M14.8,134.7 L46.2,129.1" stroke="#7a6a1c" stroke-width="1.4"/><polygon points="0.0,108.9 13.7,143.7 0.0,143.7" fill="#8f9092" /><path d="M34.5,78.6 L51.3,119.0" stroke="#9d988f" stroke-width="11.8"/><path d="M49.6,75.2 L55.2,87.5" stroke="#4b4743" stroke-width="14.6"/><path d="M55.8,88.7 L65.9,110.0" stroke="#3eb0a7" stroke-width="14.0" stroke-linecap="round"/><polygon points="58.6,134.7 69.8,129.1 86.6,130.2 88.9,143.7 59.7,143.7" fill="#2a2c2b" /><polygon points="118.1,143.7 125.9,124.6 143.9,116.7 143.9,143.7" fill="#2c2d2b" /></g></g></svg>
<div class="t " id="t40" style="left:583.8px;top:853.4px;font-size:23.18px;line-height:30.1px;color:#343436;font-weight:700;letter-spacing:-0.189px;">Camping</div>
<div class="t " id="t41" style="left:583.8px;top:893.0px;font-size:23.18px;line-height:30.1px;color:#818181;letter-spacing:0.079px;">Description</div>
<div class="t " id="t42" style="left:714.7px;top:893.0px;font-size:23.18px;line-height:30.1px;color:#38383b;letter-spacing:-1.465px;">N/A</div>
<div class="t " id="t43" style="left:583.8px;top:932.4px;font-size:23.18px;line-height:30.1px;color:#818181;letter-spacing:-0.200px;">Status</div>
<div class="t " id="t44" style="left:714.7px;top:932.4px;font-size:23.18px;line-height:30.1px;color:#38383b;letter-spacing:-0.120px;">Active</div>
<div style="position:absolute;left:388px;top:1004.6px;width:829px;height:1.6px;background:#e9e9e9"></div>
<svg style="left:413.5px;top:1044.8px;overflow:hidden" width="144" height="144.0" viewBox="0 0 144 144.0"><defs><clipPath id="tc4"><rect width="144" height="144" rx="7"/></clipPath><filter id="sf4" x="-5%" y="-5%" width="110%" height="110%" color-interpolation-filters="sRGB"><feGaussianBlur stdDeviation="0.7" color-interpolation-filters="sRGB"/></filter></defs><g clip-path="url(#tc4)"><g filter="url(#sf4)"><defs><linearGradient id="tin" x1="0" y1="0" x2="1" y2="0"><stop offset="0" stop-color="#5d5a55"/><stop offset="0.3" stop-color="#a7a39b"/><stop offset="0.55" stop-color="#8a867f"/><stop offset="1" stop-color="#55524e"/></linearGradient><radialGradient id="wax" cx="0.5" cy="0.5" r="0.6"><stop offset="0" stop-color="#f6f4ea"/><stop offset="1" stop-color="#e4e1d4"/></radialGradient></defs><rect width="144" height="144" fill="#6f6a61"/><rect x="0" y="116.9" width="89.8" height="27.099999999999994" fill="#c5b596"/><path d="M1.3,124.8 L10.3,122.6 L12.6,136.0 L4.7,140.5Z" fill="none" stroke="#6e6250" stroke-width="0.8"/><polygon points="74.3,0.0 143.9,0.0 143.9,143.9 85.5,143.9 87.8,68.7 76.5,57.5" fill="#17161a" /><polygon points="90.0,100.1 114.7,102.4 113.6,143.9 87.8,143.9" fill="#2a2830" /><rect x="0" y="68.7" width="18.5" height="47.1" fill="#6d6964"/><ellipse cx="-2.0" cy="75.4" rx="21.3" ry="22.4" fill="#8e8a84"/><ellipse cx="-4.3" cy="68.7" rx="14.6" ry="14.6" fill="#bfb092"/><path d="M19.3,91.1 V124.8 Q53.0,152.9 87.8,124.8 V91.1Z" fill="url(#tin)"/><ellipse cx="53.5" cy="85.5" rx="34.6" ry="24.1" fill="#a9a59d"/><ellipse cx="53.5" cy="88.9" rx="33.7" ry="22.4" fill="none" stroke="#5f5c57" stroke-width="1"/><ellipse cx="53.0" cy="82.2" rx="28.6" ry="18.0" fill="#cbbd9f"/><path d="M40.6,75.4 L54.1,68.7 L73.2,72.1 L72.1,79.9 L54.1,83.3 L41.8,79.9Z M30.5,85.5 L72.1,91.1" fill="none" stroke="#7b6f5b" stroke-width="0.9"/><path d="M5.8,18.2 V53.0 Q40.6,82.2 76.5,53.0 V18.2Z" fill="url(#tin)"/><ellipse cx="41.2" cy="18.2" rx="35.4" ry="22.4" fill="#aaa69e"/><ellipse cx="41.2" cy="22.1" rx="34.6" ry="21.3" fill="none" stroke="#5f5c57" stroke-width="1"/><ellipse cx="40.6" cy="14.3" rx="29.4" ry="17.4" fill="#c9ba9b"/><path d="M28.3,13.7 L41.8,7.0 L60.8,11.4 L58.6,20.4 L44.0,27.2 L30.5,23.8Z M17.1,7.0 L45.1,1.9" fill="none" stroke="#6e6351" stroke-width="1"/><ellipse cx="110.2" cy="13.1" rx="35.4" ry="18.5" fill="url(#wax)"/><path d="M119.2,11.4 L120.3,17.1" stroke="#b7b29c" stroke-width="0.8"/><ellipse cx="121.4" cy="67.6" rx="32.5" ry="33.7" fill="#2b2a2c"/><ellipse cx="122.6" cy="68.7" rx="30.3" ry="29.7" fill="url(#wax)"/><path d="M133.2,66.4 L134.3,72.1" stroke="#b7b29c" stroke-width="0.8"/><ellipse cx="133.2" cy="126.5" rx="20.8" ry="17.4" fill="#b9aa8b"/><path d="M122.6,119.2 L136.0,113.6 L143.9,116.9 M121.4,134.9 L141.6,132.7" fill="none" stroke="#6e6351" stroke-width="0.9"/></g></g></svg>
<div class="t " id="t45" style="left:583.8px;top:1063.0px;font-size:23.18px;line-height:30.1px;color:#343436;font-weight:700;letter-spacing:-0.193px;">Candles</div>
<div class="t " id="t46" style="left:583.8px;top:1102.5px;font-size:23.18px;line-height:30.1px;color:#818181;letter-spacing:0.079px;">Description</div>
<div class="t " id="t47" style="left:714.7px;top:1102.5px;font-size:23.18px;line-height:30.1px;color:#38383b;letter-spacing:-1.465px;">N/A</div>
<div class="t " id="t48" style="left:583.8px;top:1142.0px;font-size:23.18px;line-height:30.1px;color:#818181;letter-spacing:-0.200px;">Status</div>
<div class="t " id="t49" style="left:714.7px;top:1142.0px;font-size:23.18px;line-height:30.1px;color:#38383b;letter-spacing:-0.120px;">Active</div>
<div style="position:absolute;left:388px;top:1214.2px;width:829px;height:1.6px;background:#e9e9e9"></div>
<svg style="left:413.5px;top:1254.4px" width="144" height="144" viewBox="0 0 144 144"><defs><linearGradient id="ng" x1="0" y1="0" x2="0" y2="1"><stop offset="0" stop-color="#cfcfcf"/><stop offset="1" stop-color="#a6a6a6"/></linearGradient></defs><g transform="translate(0 2.4)"><polygon points="43.5,43.5 56.5,40 58,60 70,66 52.5,72" fill="#dedede"/><g transform="rotate(8 77 45)"><rect x="58" y="23.5" width="38" height="42" fill="url(#ng)"/><rect x="62.5" y="28" width="29" height="28.5" fill="#fff"/><polygon points="64.5,54.5 64.5,45 71.5,39.5 75,44 88.5,36 89.5,54.5" fill="#b7b7b7"/></g></g><text x="72.8" y="104.8" text-anchor="middle" font-family="Liberation Sans, sans-serif" font-size="16.6" fill="#7a7a7a" stroke="#7a7a7a" stroke-width="0.4" textLength="90" lengthAdjust="spacing">NO IMAGE</text><text x="72.8" y="125.2" text-anchor="middle" font-family="Liberation Sans, sans-serif" font-size="16.6" fill="#7a7a7a" stroke="#7a7a7a" stroke-width="0.4" textLength="96.6" lengthAdjust="spacing">AVAILABLE</text></svg>
<div class="t " id="t50" style="left:583.8px;top:1272.5px;font-size:23.18px;line-height:30.1px;color:#343436;font-weight:700;letter-spacing:-0.313px;">CANN</div>
<div class="t " id="t51" style="left:583.8px;top:1312.2px;font-size:23.18px;line-height:30.1px;color:#818181;letter-spacing:0.079px;">Description</div>
<div class="t " id="t52" style="left:714.7px;top:1312.2px;font-size:23.18px;line-height:30.1px;color:#38383b;letter-spacing:-1.465px;">N/A</div>
<div class="t " id="t53" style="left:583.8px;top:1351.5px;font-size:23.18px;line-height:30.1px;color:#818181;letter-spacing:-0.200px;">Status</div>
<div class="t " id="t54" style="left:714.7px;top:1351.5px;font-size:23.18px;line-height:30.1px;color:#38383b;letter-spacing:-0.120px;">Active</div>
<div style="position:absolute;left:388px;top:1423.8px;width:829px;height:1.6px;background:#e9e9e9"></div>
<svg style="left:413.5px;top:1464.0px;overflow:hidden" width="144" height="124.0" viewBox="0 0 144 124.0"><defs><clipPath id="tc6"><rect width="144" height="144" rx="7"/></clipPath><filter id="sf6" x="-5%" y="-5%" width="110%" height="110%" color-interpolation-filters="sRGB"><feGaussianBlur stdDeviation="0.7" color-interpolation-filters="sRGB"/></filter></defs><g clip-path="url(#tc6)"><g filter="url(#sf6)"><defs><linearGradient id="denim" x1="0" y1="0" x2="1" y2="1"><stop offset="0" stop-color="#6c95c8"/><stop offset="1" stop-color="#4f7bb4"/></linearGradient></defs><rect width="144" height="144" fill="#f1f1f3"/><polygon points="98.7,0.0 144.4,0.0 144.4,68.4 121.8,53.3 101.8,46.3 97.7,43.3 110.3,29.3" fill="url(#denim)" /><polygon points="96.7,0.0 131.8,0.0 120.8,14.2 110.3,23.3" fill="#5c6466" /><polygon points="110.8,5.2 117.8,3.7 118.8,10.2 111.8,11.7" fill="#25294a" /><path d="M121.8,51.3 L144.4,26.3 M129.8,29.3 L144.4,14.2" stroke="#8fb0d8" stroke-width="0.9"/><path d="M78.7,0.0 H97.7 Q106.8,14.2 110.3,29.3 Q106.8,40.3 95.7,39.8 Q81.7,35.3 74.7,27.8 Q73.7,11.2 78.7,0.0Z" fill="#ead6aa"/><path d="M91.7,11.2 Q99.7,21.3 105.8,33.3" fill="none" stroke="#d9c08c" stroke-width="1.6"/><polygon points="0.0,51.3 34.6,71.4 47.6,80.4 50.6,90.4 30.6,91.4 24.6,124.5 0.0,124.5" fill="#252938" /><path d="M0.0,59.3 L31.6,77.4 L20.6,124.5" fill="none" stroke="#343a4e" stroke-width="2.2"/><path d="M25.6,99.4 Q27.6,91.4 34.6,90.9 L61.7,95.4 Q70.7,101.5 69.7,111.5 L67.7,124.5 H53.6 Z" fill="#e8cc9a"/><polygon points="24.6,100.5 51.6,114.5 53.6,124.5 23.6,124.5" fill="#1b1e29" /><path d="M121.8,124.5 Q122.8,106.5 128.8,99.4 Q134.8,95.4 144.4,95.4 V124.5Z" fill="#eee3c9"/><polygon points="105.8,124.5 109.8,118.5 120.8,114.5 121.8,124.5" fill="#3c8bd2" /><path d="M73.7,29.1 Q67.7,34.3 61.7,30.8 Q50.6,27.3 47.6,37.3 Q48.6,47.3 63.7,49.3" fill="none" stroke="#6c6c6c" stroke-width="1"/><path d="M67.7,99.9 L77.7,92.4 Q87.7,97.4 94.7,89.4 Q97.7,74.4 78.7,73.4" fill="none" stroke="#6c6c6c" stroke-width="1"/><path d="M130.8,96.4 L125.8,83.4 Q133.8,64.4 118.8,62.9 Q107.8,66.4 108.8,81.4" fill="none" stroke="#6c6c6c" stroke-width="1"/></g></g></svg>
<div class="t " id="t55" style="left:583.8px;top:1482.1px;font-size:23.18px;line-height:30.1px;color:#343436;font-weight:700;letter-spacing:-0.136px;">Clothing</div>
<div class="t " id="t56" style="left:583.8px;top:1521.8px;font-size:23.18px;line-height:30.1px;color:#818181;letter-spacing:0.079px;">Description</div>
<div class="t " id="t57" style="left:714.7px;top:1521.8px;font-size:23.18px;line-height:30.1px;color:#38383b;letter-spacing:-1.465px;">N/A</div>
<div class="t " id="t58" style="left:583.8px;top:1561.1px;font-size:23.18px;line-height:30.1px;color:#818181;letter-spacing:-0.200px;">Status</div>
<div class="t " id="t59" style="left:714.7px;top:1561.1px;font-size:23.18px;line-height:30.1px;color:#38383b;letter-spacing:-0.120px;">Active</div>
<div id="right" style="position:absolute;left:1218px;top:0;width:1650px;height:1588px;background:#f5f5f5"></div>
<div style="position:absolute;left:1218px;top:0;width:1650px;height:90px;background:#fff;border-bottom:1.6px solid #c4c4c4;box-shadow:0 1px 2px rgba(0,0,0,.10)"></div>
<div class="t med" id="t60" style="left:1334.0px;top:24.1px;font-size:33.12px;line-height:43.1px;color:#333;font-weight:500;letter-spacing:-0.657px;">Action Cameras</div>
<svg style="left:1250px;top:31.9px" width="26" height="25.4" viewBox="0 0 26 25.4" ><path d="M25.9,12.7 H2.6 M13.4,1.2 L1.8,12.7 L13.4,24.2" fill="none" stroke="#333" stroke-width="3.4"/></svg>
<svg style="left:2760px;top:29px" width="45" height="39" viewBox="0 0 45 39" ><path d="M20,8.6 H6 Q2.3,8.6 2.3,12.3 V32.8 Q2.3,36.5 6,36.5 H28.6 Q32.3,36.5 32.3,32.8 V22.4" fill="none" stroke="#2f60bb" stroke-width="4.6"/><path d="M16.4,21.4 L35.4,2.4 Q37.4,0.4 39.4,2.4 L42.6,5.6 Q44.6,7.6 42.6,9.6 L23.6,28.6 L14.8,30.2Z" fill="#fff" stroke="#2f60bb" stroke-width="3.6" stroke-linejoin="round"/><path d="M32.6,5.6 L39.6,12.6" stroke="#2f60bb" stroke-width="3.2"/></svg>
<svg style="left:2826.6px;top:29px" width="34.4" height="38.8" viewBox="0 0 34.4 38.8" ><path fill="#2f60bb" d="M11.4,0.8 Q12,0 13,0 H21.4 Q22.4,0 23,0.8 L24,2.2 H32.8 Q34.4,2.2 34.4,3.8 V5.8 Q34.4,7.4 32.8,7.4 H1.6 Q0,7.4 0,5.8 V3.8 Q0,2.2 1.6,2.2 H10.4Z"/><path fill="#2f60bb" d="M2.6,10 H31.8 L30.2,35.4 Q30,38.8 26.6,38.8 H7.8 Q4.4,38.8 4.2,35.4Z"/></svg>
<div style="position:absolute;left:1247.4px;top:115.2px;width:1599.6px;height:338.6px;background:#fff;border-radius:9px;box-shadow:0 2px 5px rgba(0,0,0,.14)"></div>
<svg style="left:1272.6px;top:140.6px" width="288" height="288" viewBox="0 0 144 144"><use href="#actioncam" width="144" height="144"/></svg>
<div class="t med" id="t61" style="left:1612.7px;top:146.0px;font-size:33.12px;line-height:43.1px;color:#222;font-weight:500;letter-spacing:-0.657px;">Action Cameras</div>
<div class="t " id="t62" style="left:1612.7px;top:210.3px;font-size:26.5px;line-height:34.5px;color:#666;letter-spacing:-0.108px;">No description</div>
<div style="position:absolute;left:1247.4px;top:480.4px;width:1599.6px;height:410.2px;background:#fff;border-radius:9px;box-shadow:0 2px 5px rgba(0,0,0,.14)"></div>
<div style="position:absolute;left:1260.3px;top:493.2px;width:1309.4px;height:68.4px;box-sizing:border-box;border:1.4px solid #858585;border-radius:16px;background:#fff"></div>
<div class="t " id="t63" style="left:1324.2px;top:509.1px;font-size:26.5px;line-height:34.5px;color:#5c5c5c;letter-spacing:-0.132px;">Search product</div>
<div class="t " id="t64" style="left:2647.7px;top:512.6px;font-size:23.18px;line-height:30.1px;color:#444;">Filter by vendor</div>
<div style="position:absolute;left:1260.3px;top:574.8px;width:440.3px;height:53.6px;background:#2f60bb;border-radius:14px;box-shadow:0 2px 4px rgba(0,0,0,.3)"></div>
<div class="t " id="t65" style="left:1306.0px;top:586.4px;font-size:23.18px;line-height:30.1px;color:#fff;font-weight:700;letter-spacing:-0.560px;">Associate Product To A Category</div>
<div style="position:absolute;left:1712.6px;top:574.8px;width:223.4px;height:53.6px;background:#e0e0e0;border-radius:14px"></div>
<div class="t " id="t66" style="left:1758.0px;top:586.4px;font-size:23.18px;line-height:30.1px;color:#9a9a9a;letter-spacing:0.204px;">Disassociate</div>
<div style="position:absolute;left:1260.3px;top:667.4px;width:1573px;height:210.4px;box-sizing:border-box;border:2px solid #efefef;border-radius:16px;background:#fff"></div>
<div style="position:absolute;left:1262px;top:745px;width:1569.6px;height:2px;background:#ebebeb"></div>
<div style="position:absolute;left:1262px;top:811.2px;width:1569.6px;height:2px;background:#ebebeb"></div>
<div style="position:absolute;left:1273.2px;top:692.8px;width:28.2px;height:28.2px;box-sizing:border-box;border:3.2px solid #6b6b6b;border-radius:3.5px;background:#fff"></div>
<div style="position:absolute;left:1273.2px;top:765.2px;width:28.2px;height:28.2px;box-sizing:border-box;border:3.2px solid #6b6b6b;border-radius:3.5px;background:#fff"></div>
<div style="position:absolute;left:1273.2px;top:831.0px;width:28.2px;height:28.2px;box-sizing:border-box;border:3.2px solid #6b6b6b;border-radius:3.5px;background:#fff"></div>
<div class="t " id="t67" style="left:1313.5px;top:692.0px;font-size:23.18px;line-height:30.1px;color:#333;font-weight:700;letter-spacing:-1.389px;">No</div>
<div class="t " id="t68" style="left:1419.4px;top:692.0px;font-size:23.18px;line-height:30.1px;color:#333;font-weight:700;letter-spacing:-0.413px;">SKU #</div>
<div class="t " id="t69" style="left:1733.5px;top:692.0px;font-size:23.18px;line-height:30.1px;color:#333;font-weight:700;letter-spacing:-0.176px;">Product</div>
<div class="t " id="t70" style="left:2519.0px;top:692.0px;font-size:23.18px;line-height:30.1px;color:#333;font-weight:700;letter-spacing:-0.022px;">Primary Vendor</div>
<div class="t " id="t71" style="left:1313.5px;top:764.4px;font-size:23.18px;line-height:30.1px;color:#333;letter-spacing:-1.500px;">1</div>
<div class="t " id="t72" style="left:1419.4px;top:764.4px;font-size:23.18px;line-height:30.1px;color:#333;letter-spacing:-0.346px;">9SIB3WTG205218</div>
<div class="t " id="t73" style="left:1733.5px;top:764.4px;font-size:23.18px;line-height:30.1px;color:#333;letter-spacing:-0.356px;">APEMAN Action Camera A100</div>
<div class="t " id="t74" style="left:2519.0px;top:764.4px;font-size:23.18px;line-height:30.1px;color:#333;letter-spacing:0.017px;">Highland Appliances</div>
<div class="t " id="t75" style="left:1313.5px;top:830.2px;font-size:23.18px;line-height:30.1px;color:#333;letter-spacing:-0.890px;">2</div>
<div class="t " id="t76" style="left:1419.4px;top:830.2px;font-size:23.18px;line-height:30.1px;color:#333;letter-spacing:0.176px;">N82E16830855007</div>
<div class="t " id="t77" style="left:1733.5px;top:830.2px;font-size:23.18px;line-height:30.1px;color:#333;letter-spacing:-0.243px;">Insta360 ONE X2 CINOSXX/A Black Action Camera</div>
<div class="t " id="t78" style="left:2519.0px;top:830.2px;font-size:23.18px;line-height:30.1px;color:#333;letter-spacing:0.017px;">Highland Appliances</div>
<svg style="left:1277.4px;top:510px" width="29.2" height="29.2" viewBox="0 0 29.2 29.2" ><circle cx="11.6" cy="11.6" r="9.2" fill="none" stroke="#8a8a8a" stroke-width="4.6"/><path d="M18.6,18.6 L26.8,26.8" stroke="#8a8a8a" stroke-width="5.2" stroke-linecap="round"/></svg>
<svg style="left:2582.5px;top:509.4px" width="39.4" height="34.5" viewBox="0 0 39.4 34.5" ><path fill="#2f60bb" d="M0.00,1.69 L1.66,0.00 L10.44,0.00 L12.10,1.69 L12.10,16.16 L25.75,8.44 L25.75,16.16 L39.40,8.44 L39.40,32.81 L37.74,34.50 L1.66,34.50 L0.00,32.81Z"/></svg>
</body></html>
